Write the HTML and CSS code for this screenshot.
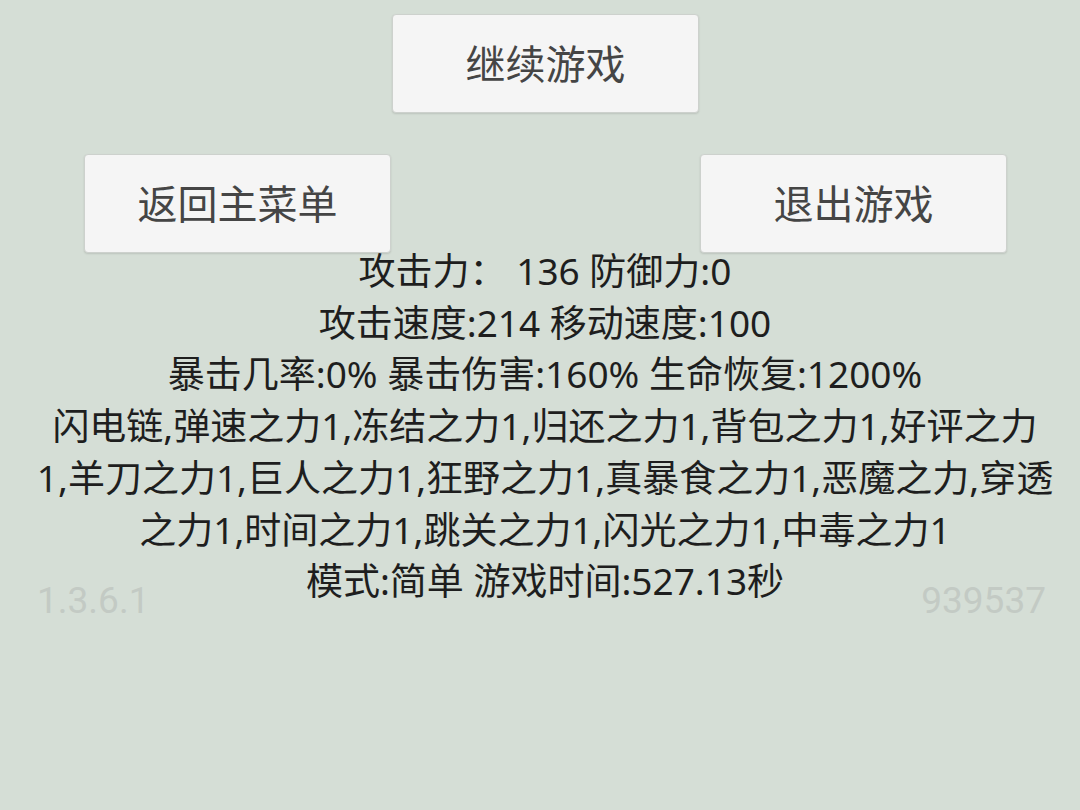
FILE: index.html
```html
<!DOCTYPE html>
<html lang="zh-CN">
<head>
<meta charset="utf-8">
<title>暂停</title>
<link rel="stylesheet" href="styles.css">
</head>
<body>
<div class="screen">
  <div class="row row-top">
    <button class="btn">继续游戏</button>
  </div>
  <div class="row row-mid">
    <button class="btn">返回主菜单</button>
    <button class="btn">退出游戏</button>
  </div>
  <div class="stats">
    <span class="line">攻击力： 136 防御力:0</span>
    <span class="line">攻击速度:214 移动速度:100</span>
    <span class="line">暴击几率:0% 暴击伤害:160% 生命恢复:1200%</span>
    <span class="line">闪电链,弹速之力1,冻结之力1,归还之力1,背包之力1,好评之力</span>
    <span class="line">1,羊刀之力1,巨人之力1,狂野之力1,真暴食之力1,恶魔之力,穿透</span>
    <span class="line">之力1,时间之力1,跳关之力1,闪光之力1,中毒之力1</span>
    <span class="line">模式:简单 游戏时间:527.13秒</span>
  </div>
  <div class="footer">
    <span class="faint">1.3.6.1</span>
    <span class="faint">939537</span>
  </div>
</div>
</body>
</html>
```
FILE: styles.css
```css
html, body {
  margin: 0;
  padding: 0;
  background: #d5ded6;
}
.screen {
  width: 1080px;
  height: 810px;
  overflow: hidden;
  font-family: "Noto Sans", "Noto Sans CJK SC", sans-serif;
}
.row {
  display: flex;
}
.row-top {
  padding-top: 14px;
  padding-left: 392px;
}
.row-mid {
  margin-top: 41px;
  padding-left: 84px;
  gap: 309px;
}
.btn {
  width: 307px;
  height: 99px;
  margin: 0;
  padding: 0 0 4px 0;
  background: #f5f5f5;
  border: 1px solid #cdd1cd;
  border-radius: 4px;
  box-shadow: 0 1px 2px rgba(0,0,0,0.12);
  font-family: "Noto Sans CJK SC", sans-serif;
  font-size: 40px;
  color: #454545;
  line-height: 1;
}
.stats {
  margin-top: -8px;
  padding-left: 10px;
  display: flex;
  flex-direction: column;
  align-items: center;
  color: #1e1e1e;
  font-size: 37px;
  line-height: 51.7px;
}
.line {
  white-space: nowrap;
}
.footer {
  display: flex;
  justify-content: space-between;
  padding: 0 34px 0 37px;
  margin-top: -28px;
}
.faint {
  font-family: "Roboto", "Liberation Sans", sans-serif;
  font-size: 37px;
  color: #c3cac4;
}
```
